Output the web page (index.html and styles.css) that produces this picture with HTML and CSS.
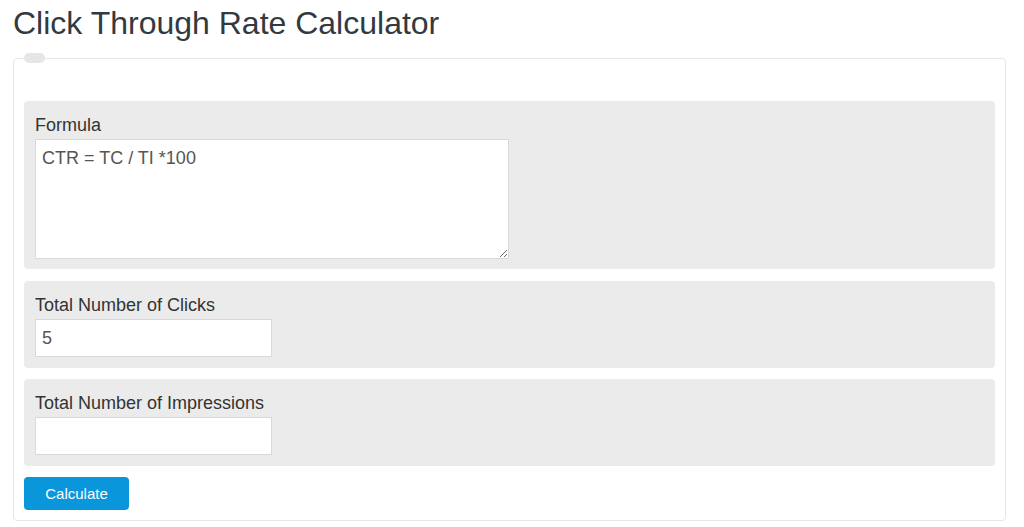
FILE: index.html
```html
<!DOCTYPE html>
<html>
<head>
<meta charset="utf-8">
<link rel="stylesheet" href="styles.css">
</head>
<body>
<div class="page">
  <h1 class="title">Click Through Rate Calculator</h1>
  <form class="card">
    <span class="legend"></span>
    <div class="section section-first">
      <label class="label">Formula</label>
      <textarea class="textarea">CTR = TC / TI *100</textarea>
    </div>
    <div class="section">
      <label class="label">Total Number of Clicks</label>
      <input class="input" type="text" value="5">
    </div>
    <div class="section">
      <label class="label">Total Number of Impressions</label>
      <input class="input" type="text" value="">
    </div>
    <button class="btn" type="button">Calculate</button>
  </form>
</div>
</body>
</html>
```
FILE: styles.css
```css
html, body {
  margin: 0;
  padding: 0;
  background: #ffffff;
}
body {
  font-family: "Liberation Sans", Arial, sans-serif;
  color: #333333;
}
.page {
  padding: 0 18px 0 13px;
}
.title {
  margin: 5px 0 0 0;
  font-size: 32px;
  line-height: 36px;
  font-weight: normal;
  color: #333a3f;
}
.card {
  position: relative;
  margin-top: 17px;
  border: 1px solid #e6e6e6;
  border-radius: 4px;
  padding: 42px 10px 10px 10px;
  height: 463px;
  box-sizing: border-box;
}
.legend {
  position: absolute;
  left: 10px;
  top: -6px;
  width: 21px;
  height: 10px;
  border-radius: 5px;
  background: #e6e6e6;
}
.section {
  background: #ebebeb;
  border-radius: 4px;
  padding: 12px 11px 11px 11px;
  margin-bottom: 11px;
}
.section-first {
  padding-bottom: 10px;
  margin-bottom: 12px;
}
.label {
  display: block;
  font-size: 18px;
  line-height: 25px;
  margin-bottom: 1px;
  color: #333333;
}
.textarea {
  display: block;
  box-sizing: border-box;
  width: 474px;
  height: 120px;
  margin: 0;
  border: 1px solid #d9d9d9;
  background: #ffffff;
  padding: 6px 6px;
  font-family: "Liberation Sans", Arial, sans-serif;
  font-size: 18px;
  line-height: 25.7px;
  color: #555555;
  resize: vertical;
}
.input {
  display: block;
  box-sizing: border-box;
  width: 237px;
  height: 38px;
  margin: 0;
  border: 1px solid #d9d9d9;
  background: #ffffff;
  padding: 0 6px;
  font-family: "Liberation Sans", Arial, sans-serif;
  font-size: 18px;
  color: #555555;
}
.btn {
  display: block;
  box-sizing: border-box;
  width: 105px;
  height: 33px;
  border: none;
  border-radius: 4px;
  background: #0a96db;
  color: #ffffff;
  font-family: "Liberation Sans", Arial, sans-serif;
  font-size: 15px;
  padding: 0;
  margin: 0;
}
```
